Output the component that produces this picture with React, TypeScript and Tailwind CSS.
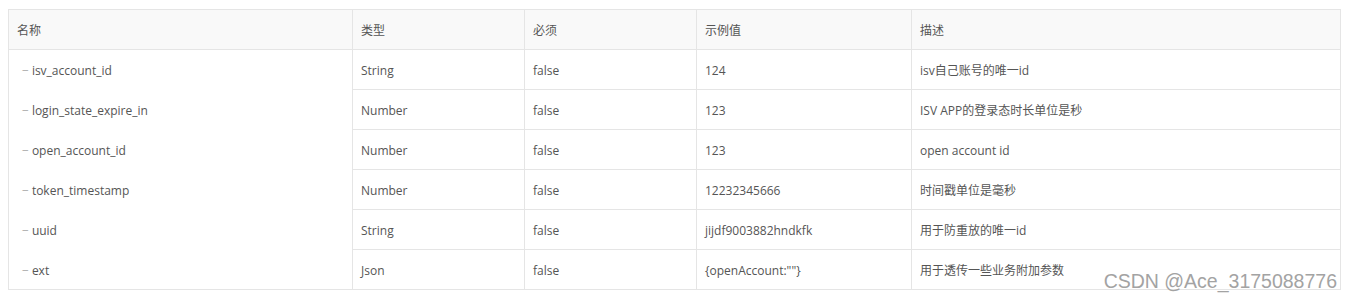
// API response params table, with the faint CSDN watermark in the corner.

const ROWS = [
  { name: 'isv_account_id', type: 'String', required: 'false', example: '124', desc: 'isv自己账号的唯一id' },
  { name: 'login_state_expire_in', type: 'Number', required: 'false', example: '123', desc: 'ISV APP的登录态时长单位是秒' },
  { name: 'open_account_id', type: 'Number', required: 'false', example: '123', desc: 'open account id' },
  { name: 'token_timestamp', type: 'Number', required: 'false', example: '12232345666', desc: '时间戳单位是毫秒' },
  { name: 'uuid', type: 'String', required: 'false', example: 'jijdf9003882hndkfk', desc: '用于防重放的唯一id' },
  { name: 'ext', type: 'Json', required: 'false', example: '{openAccount:""}', desc: '用于透传一些业务附加参数' },
]

const HEADERS = ['名称', '类型', '必须', '示例值', '描述']

export default function App() {
  return (
    <div
      className="relative w-[1350px] h-[302px] bg-white pl-2 pt-[9px] text-[12px] text-[#555]"
      style={{ fontFamily: '"Open Sans", "Noto Sans CJK SC", sans-serif' }}
    >
      <table className="w-[1333px] table-fixed border-collapse border border-[#e5e5e5]">
        <colgroup>
          <col className="w-[344px]" />
          <col className="w-[172px]" />
          <col className="w-[172px]" />
          <col className="w-[215px]" />
          <col />
        </colgroup>
        <thead>
          <tr className="h-10 bg-[#f9f9f9]">
            {HEADERS.map(h => (
              <th
                key={h}
                className="border border-[#e5e5e5] px-2 pt-[3px] text-left font-normal"
              >
                {h}
              </th>
            ))}
          </tr>
        </thead>
        <tbody>
          {ROWS.map(r => (
            <tr key={r.name} className="h-10">
              <td className="border-r border-[#e5e5e5] pl-[13px] pt-[3px]">
                <span className="mr-[3px] text-[#aaa]">−</span>
                {r.name}
              </td>
              <Cell>{r.type}</Cell>
              <Cell>{r.required}</Cell>
              <Cell>{r.example}</Cell>
              <Cell>{r.desc}</Cell>
            </tr>
          ))}
        </tbody>
      </table>

      <div
        className="absolute right-[13px] bottom-[11px] text-[19.5px] leading-none text-[#a3a3a3]"
        style={{ fontFamily: '"Liberation Sans", sans-serif' }}
      >
        CSDN @Ace_3175088776
      </div>
    </div>
  )
}

function Cell({ children }: { children: React.ReactNode }) {
  return <td className="border border-[#e5e5e5] px-2 pt-[3px]">{children}</td>
}
